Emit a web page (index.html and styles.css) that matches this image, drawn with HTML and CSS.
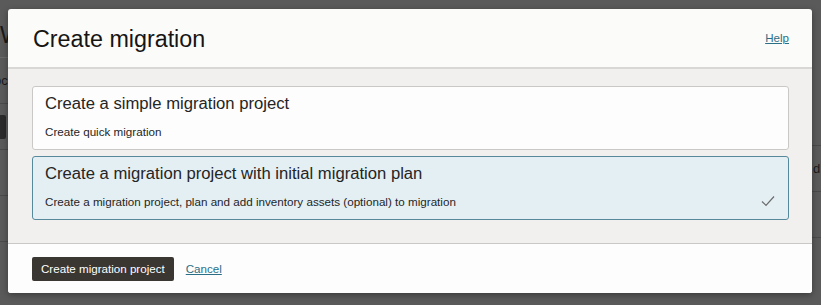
FILE: index.html
```html
<!DOCTYPE html>
<html lang="en">
<head>
  <meta charset="UTF-8">
  <title>Create migration</title>
  <link rel="stylesheet" href="styles.css">
</head>
<body>
  <div class="backdrop">
    <div class="bg-left">
      <div class="bg-title">W</div>
      <div class="bg-row bg-tab">oc</div>
      <div class="bg-row"><span class="bg-btn"></span></div>
      <div class="bg-row"></div>
      <div class="bg-row"></div>
    </div>
    <div class="bg-right">
      <div class="bg-row"></div>
      <div class="bg-row bg-col">d</div>
      <div class="bg-row"></div>
    </div>
  </div>

  <div class="modal">
    <div class="modal-header">
      <h1 class="modal-title">Create migration</h1>
      <a href="#" class="link">Help</a>
    </div>

    <div class="modal-body">
      <div class="option">
        <div class="option-title">Create a simple migration project</div>
        <div class="option-desc">Create quick migration</div>
      </div>
      <div class="option option-selected">
        <div class="option-title">Create a migration project with initial migration plan</div>
        <div class="option-desc">Create a migration project, plan and add inventory assets (optional) to migration</div>
        <svg class="check" width="14" height="12" viewBox="0 0 14 12">
          <path d="M1 6.5 L5 10.5 L13 1.5" fill="none" stroke="#6b6b6b" stroke-width="1.2"/>
        </svg>
      </div>
    </div>

    <div class="modal-footer">
      <button class="btn-primary">Create migration project</button>
      <a href="#" class="link">Cancel</a>
    </div>
  </div>
</body>
</html>
```

FILE: styles.css
```css
body {
  margin: 0;
  background-color: #5a5a5a;
  font-family: 'Liberation Sans', Arial, sans-serif;
  color: #161513;
  width: 821px;
  height: 305px;
  overflow: hidden;
  position: relative;
}

/* page behind the dialog */
.backdrop {
  display: flex;
  justify-content: space-between;
  height: 305px;
}

.bg-left {
  width: 8px;
  overflow: hidden;
  color: #1a1a1a;
}

.bg-title {
  font-size: 23px;
  height: 58px;
  padding-top: 22px;
  box-sizing: border-box;
  border-bottom: 1px solid #6a6a6a;
}

.bg-row {
  height: 45px;
  border-bottom: 1px solid #4a4a4a;
  font-size: 13px;
  display: flex;
  align-items: center;
}

.bg-tab { margin-left: -6px; }

.bg-btn {
  display: block;
  width: 6px;
  height: 24px;
  background: #2b2b2b;
  border-radius: 0 2px 2px 0;
}

.bg-right {
  width: 9px;
  overflow: hidden;
  padding-top: 100px;
  color: #1a1a1a;
}

.bg-col { padding-left: 1px; font-size: 13px; }

/* dialog */
.modal {
  position: absolute;
  left: 8px;
  top: 9px;
  width: 804px;
  height: 284px;
  background: #fbfbfa;
  border-radius: 3px;
  box-shadow: 0 2px 6px rgba(0,0,0,0.35);
  display: flex;
  flex-direction: column;
  overflow: hidden;
}

.modal-header {
  height: 58px;
  display: flex;
  align-items: center;
  justify-content: space-between;
  padding: 0 23px 0 25px;
  border-bottom: 2px solid #d8d7d5;
  flex-shrink: 0;
}

.modal-title {
  margin: 0;
  font-size: 23.3px;
  font-weight: normal;
  color: #161513;
  padding-top: 3px;
}

.link {
  color: #2b6f87;
  font-size: 11.6px;
  text-decoration: underline;
}

.modal-header .link { margin-top: -2px; }

.modal-body {
  background: #f1f0ee;
  padding: 17px 23px 0 24px;
  height: 174px;
  box-sizing: border-box;
  display: flex;
  flex-direction: column;
  gap: 6px;
  flex-shrink: 0;
}

.option {
  height: 64px;
  box-sizing: border-box;
  background: #fdfdfd;
  border: 1px solid #c9c8c6;
  border-radius: 3px;
  padding: 7px 12px 0 12px;
  position: relative;
}

.option-selected {
  background: #e4eff4;
  border-color: #55899b;
}

.option-title {
  font-size: 16.65px;
  line-height: 20px;
  color: #252525;
}

.option-desc {
  font-size: 11.65px;
  line-height: 16px;
  margin-top: 10px;
  color: #252525;
}

.check {
  position: absolute;
  right: 13px;
  bottom: 12px;
}

.modal-footer {
  border-top: 1px solid #c9c8c6;
  flex: 1;
  display: flex;
  align-items: center;
  gap: 12px;
  padding: 0 24px;
  background: #fdfdfd;
}

.btn-primary {
  height: 24px;
  padding: 0 9px;
  background: #3a3632;
  color: #ffffff;
  border: none;
  border-radius: 2px;
  font-family: 'Liberation Sans', Arial, sans-serif;
  font-size: 11.6px;
  cursor: pointer;
}
```
